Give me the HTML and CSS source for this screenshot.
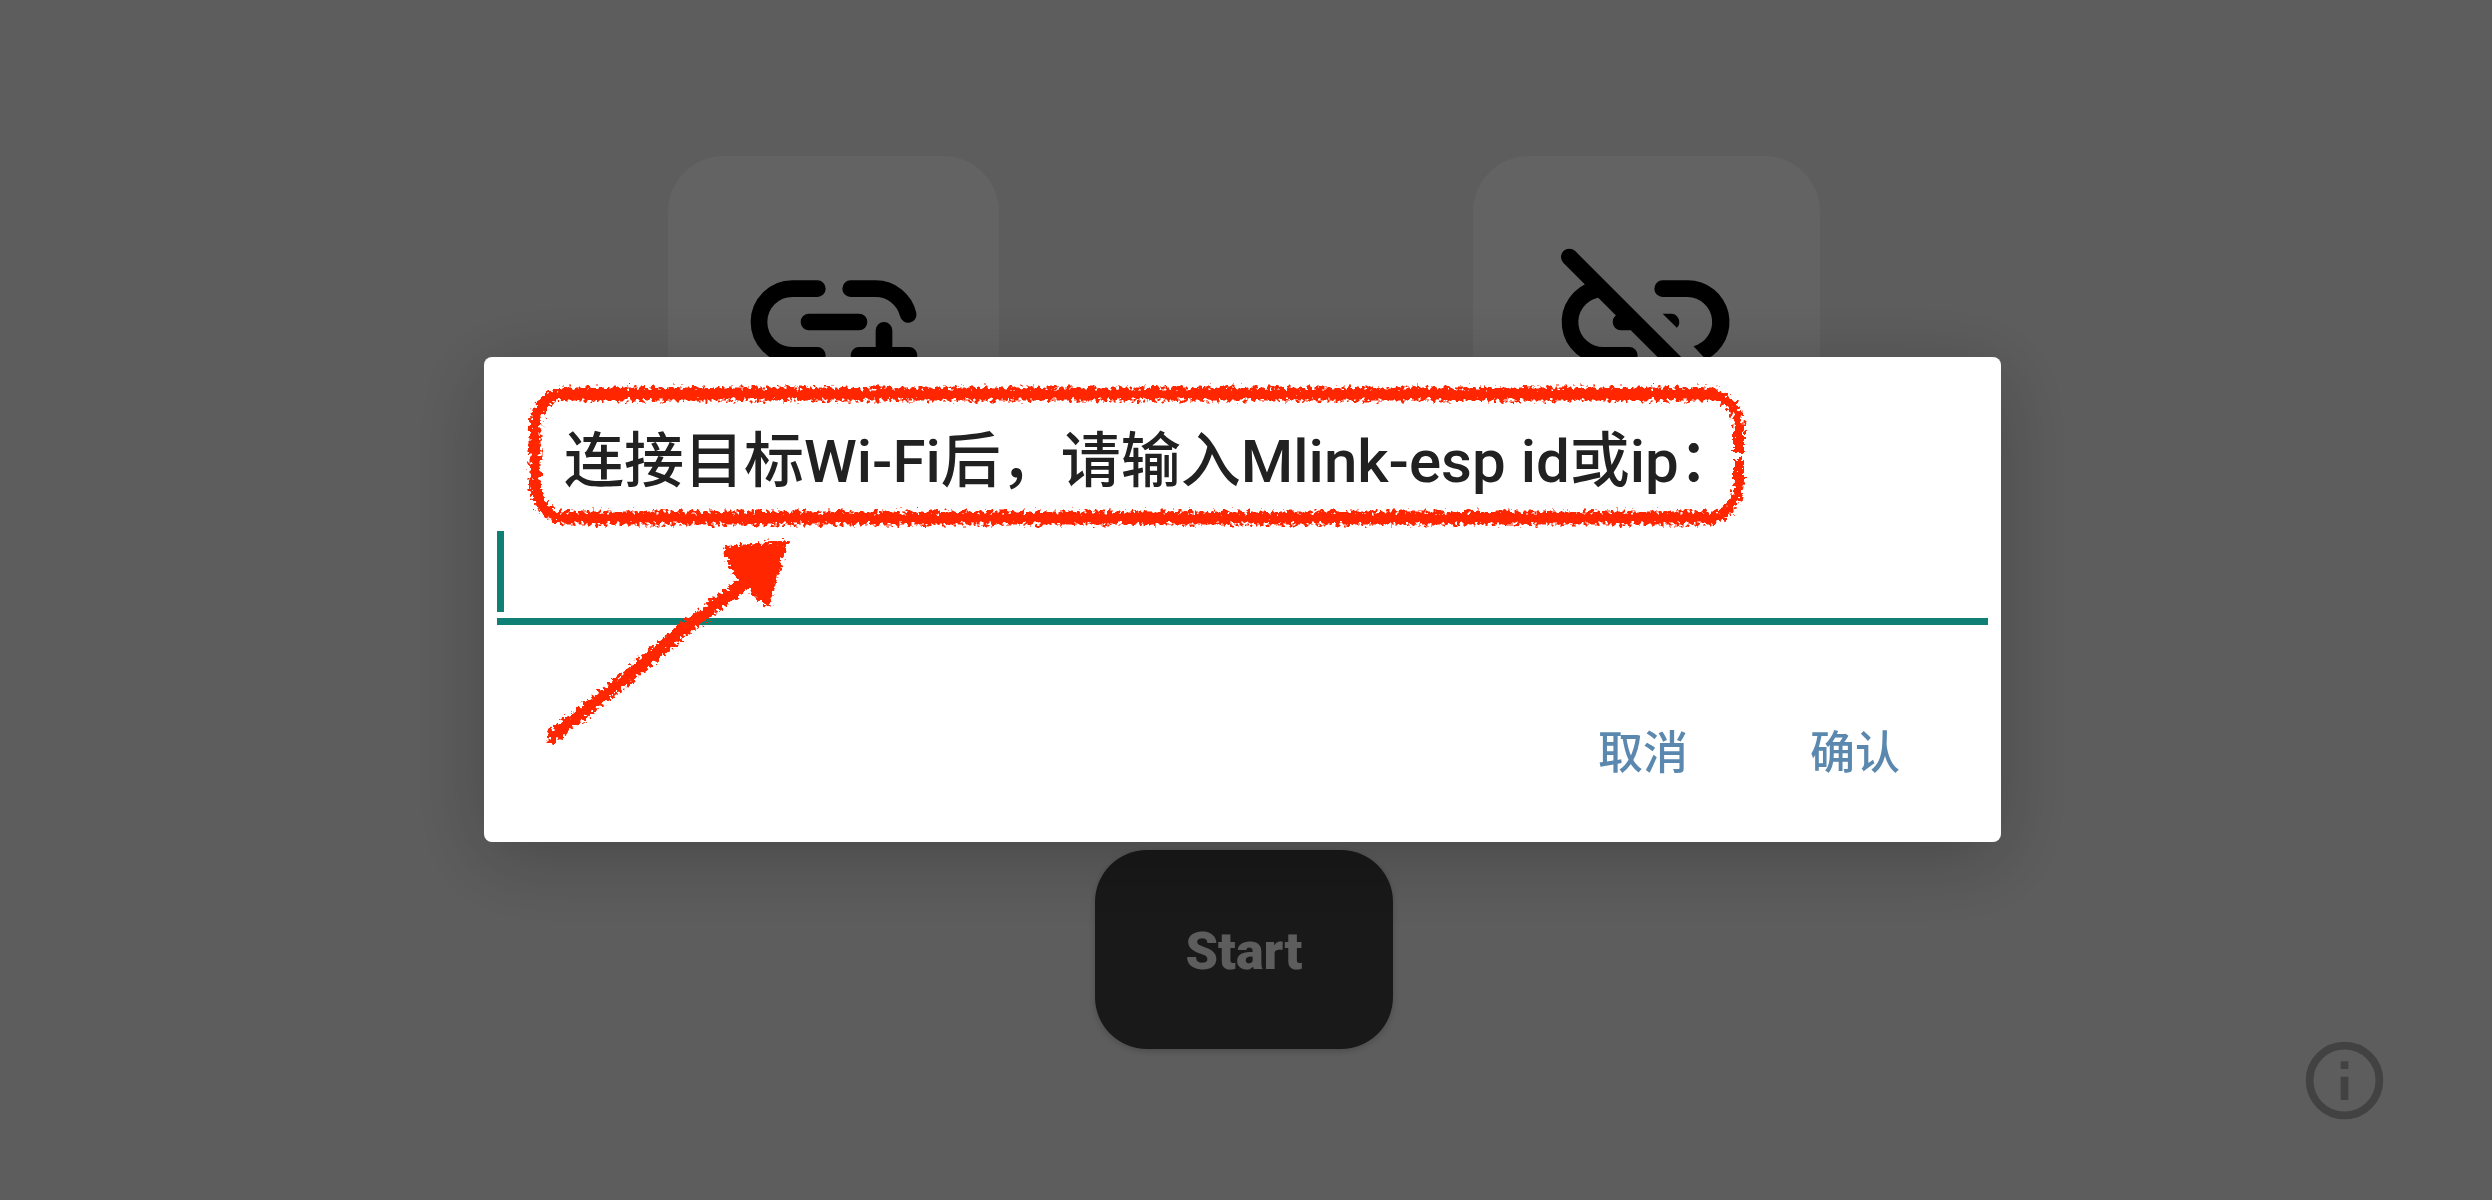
FILE: index.html
```html
<!DOCTYPE html>
<html lang="zh-CN">
<head>
  <meta charset="UTF-8" />
  <meta name="viewport" content="width=device-width, initial-scale=1.0"/>
  <title>Mlink</title>
  <link rel="stylesheet" href="styles.css">
</head>
<body>
  <main class="home">
    <div class="cards">
      <button class="card" type="button" aria-label="Add link">
        <svg class="card-icon" viewBox="0 0 24 24">
          <g fill="none" stroke="#000" stroke-width="2" stroke-linecap="round">
            <path d="M10 8H7a4 4 0 0 0 0 8h3"/>
            <path d="M14 8h3a4 4 0 0 1 3.9 3.1"/>
            <path d="M9 12h6M18 13v6M15 16h6"/>
          </g>
        </svg>
      </button>
      <button class="card card-wide" type="button" aria-label="Remove link">
        <svg class="card-icon" viewBox="0 0 24 24">
          <g fill="none" stroke="#000" stroke-width="2" stroke-linecap="round">
            <path d="M6 8.1A4 4 0 0 0 7 16h3"/>
            <path d="M9 12h1"/>
            <path d="M2.8 4.2l17 17"/>
          </g>
          <path d="M14 7h3a5 5 0 0 1 2.2 9.5l-1.5-1.6A3 3 0 0 0 17 9h-3a1 1 0 0 1 0-2z"/>
          <path d="M14 11h1a1 1 0 0 1 .7 1.7z"/>
        </svg>
      </button>
    </div>
    <button class="start" type="button">Start</button>
  </main>

  <button class="info" type="button" aria-label="Info">
    <svg viewBox="0 0 24 24">
      <circle cx="12" cy="12" r="9" fill="none" stroke="currentColor" stroke-width="2"/>
      <path fill="currentColor" d="M11 7h2v2h-2zM11 11h2v6h-2z"/>
    </svg>
  </button>

  <div class="backdrop">
    <form class="dialog" role="dialog">
      <label class="dialog-title" for="deviceId">连接目标Wi-Fi后，请输入Mlink-esp id或ip：</label>
      <div class="field">
        <input type="text" id="deviceId" autocomplete="off" />
        <span class="caret"></span>
      </div>
      <div class="actions">
        <button type="button">取消</button>
        <button type="submit">确认</button>
      </div>

      <!-- crayon frame and arrow -->
      <svg class="marks" viewBox="0 0 1517 485">
        <defs>
          <filter id="crayon" x="0" y="0" width="1517" height="485" filterUnits="userSpaceOnUse">
            <feTurbulence type="fractalNoise" baseFrequency="0.25" numOctaves="3" seed="4" result="noise"/>
            <feDisplacementMap in="SourceGraphic" in2="noise" scale="13" xChannelSelector="R" yChannelSelector="G"/>
          </filter>
        </defs>
        <g filter="url(#crayon)" fill="none" stroke="#ff2600" stroke-linecap="round" stroke-linejoin="round">
          <path stroke-width="13" d="M78 37H1228M78 161H1228"/>
          <path stroke-width="11" d="M78 37Q51 40 51 76V124Q53 156 78 161"/>
          <path stroke-width="10" stroke-linecap="butt" d="M1228 37Q1255 44 1255 72V96M1255 102V124Q1253 156 1228 161"/>
          <path stroke-width="13" d="M69 379L146 318L199 273L266 222"/>
          <path stroke-width="8" fill="#ff2600" d="M243 193L299 188L282 245L263 225L252 214Z"/>
        </g>
      </svg>
    </form>
  </div>

  <script>
    const form = document.querySelector('.dialog');
    form.onsubmit = (e) => e.preventDefault();
  </script>
</body>
</html>
```
FILE: styles.css
```css
* { box-sizing: border-box; }
body {
  margin: 0;
  min-height: 100vh;
  background: #e8e8e8;
  font-family: Roboto, "Noto Sans CJK SC", sans-serif;
}
button {
  border: 0;
  padding: 0;
  background: none;
  font-family: inherit;
}
svg { display: block; }

.home {
  display: flex;
  flex-direction: column;
  align-items: center;
  gap: 363px;
  padding: 156px 4px 0 0;
}
.cards {
  display: flex;
  justify-content: center;
  gap: 19vw;
}
.card {
  display: flex;
  align-items: center;
  justify-content: center;
  width: 331px;
  height: 331px;
  border-radius: 56px;
  background: #f7f7f7;
}
.card-wide { width: 347px; }
.card-icon { width: 200px; height: 200px; }
.start {
  width: 298px;
  height: 199px;
  padding-top: 3px;
  border-radius: 52px;
  background: #3f3f3f;
  color: #e8e8e8;
  font-size: 52px;
  font-weight: 900;
  box-shadow: 0 2px 6px rgba(0, 0, 0, 0.2);
}
.info {
  position: fixed;
  right: 101px;
  bottom: 73px;
  width: 93px;
  color: #a5a5a5;
}

.backdrop {
  position: fixed;
  inset: 0;
  display: flex;
  align-items: center;
  justify-content: center;
  padding: 0 7px 1px 0;
  background: rgba(0, 0, 0, 0.6);
}
.dialog {
  position: relative;
  width: 90%;
  max-width: 1517px;
  border-radius: 8px;
  background: #fff;
  box-shadow: 0 16px 80px rgba(0, 0, 0, 0.24);
}
.dialog-title {
  display: block;
  padding: 61px 80px 25px;
  color: #212121;
  font-size: 60px;
  font-weight: 500;
  line-height: 88px;
}
.field {
  position: relative;
  margin: 0 13px;
}
.field input {
  display: block;
  width: 100%;
  height: 94px;
  padding: 0;
  border: 0;
  border-bottom: 7px solid #108074;
  outline: 0;
  background: none;
  font: inherit;
  font-size: 60px;
}
.caret {
  position: absolute;
  top: 0;
  left: 0;
  width: 7px;
  height: 81px;
  background: #108074;
}
.actions {
  display: flex;
  justify-content: flex-end;
  gap: 26px;
  padding: 57px 53px 16px;
}
.actions button {
  padding: 0 48px;
  color: #5b88ae;
  font-size: 45px;
  font-weight: 500;
  line-height: 144px;
}
.marks {
  position: absolute;
  top: 0;
  left: 0;
  width: 100%;
  pointer-events: none;
}
```
